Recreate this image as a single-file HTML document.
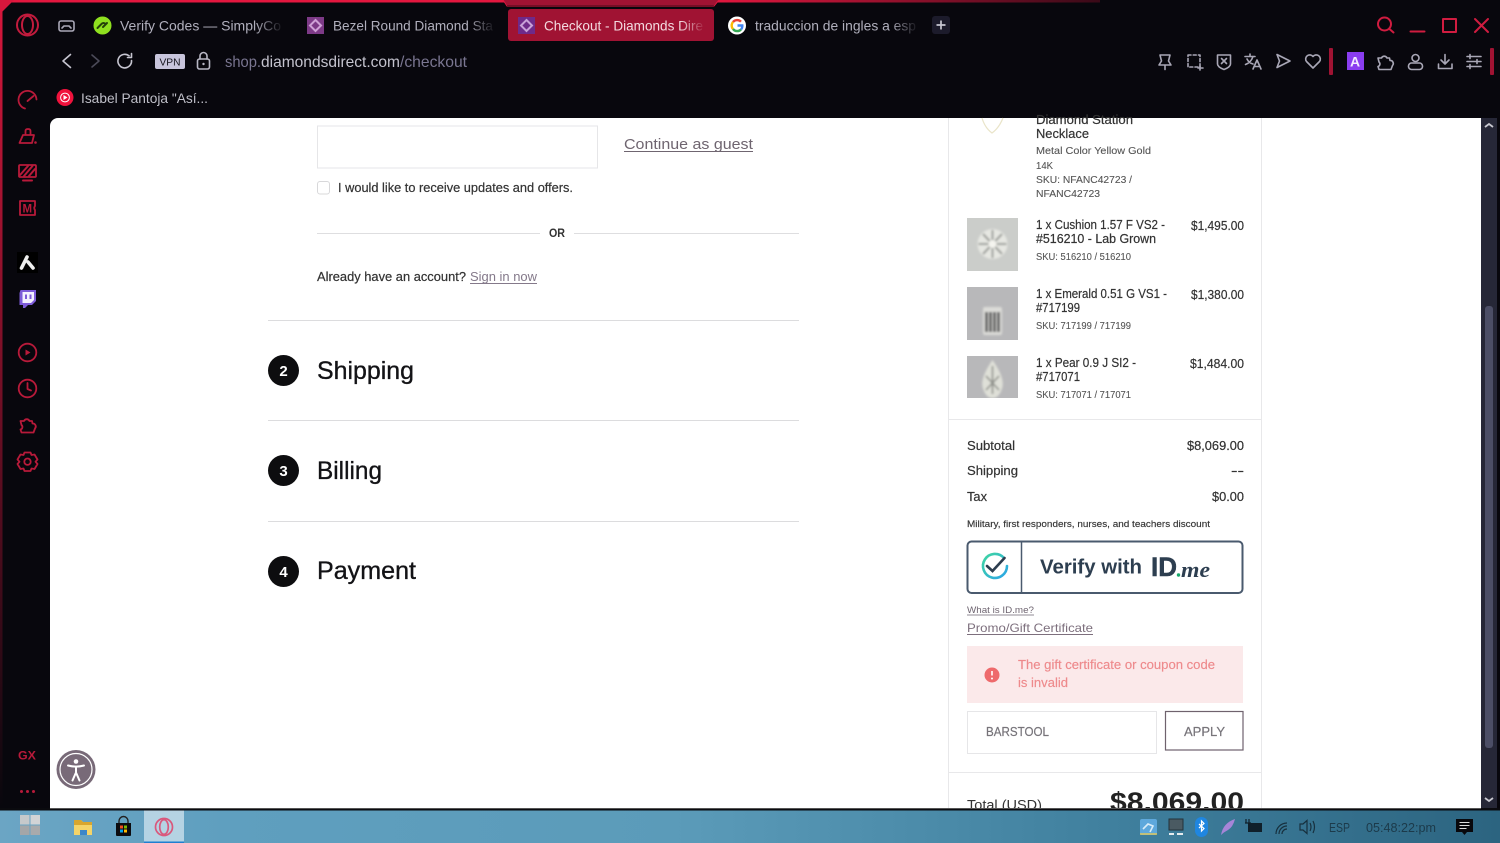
<!DOCTYPE html>
<html lang="en"><head><meta charset="utf-8"><title>Checkout - Diamonds Direct</title>
<style>
html,body{margin:0;padding:0;width:1500px;height:843px;overflow:hidden;background:#08070d}
svg{display:block;position:absolute;left:0;top:0;filter:blur(.35px)}
text{font-family:"Liberation Sans",sans-serif;white-space:pre}
.ic{fill:none;stroke:#a9a7b6;stroke-width:1.6;stroke-linecap:round;stroke-linejoin:round}
.rd{fill:none;stroke:#b81a3a;stroke-width:1.8;stroke-linecap:round;stroke-linejoin:round}
.wr{fill:none;stroke:#d01c40;stroke-width:2;stroke-linecap:round;stroke-linejoin:round}
.p{font-size:12.5px;fill:#333;stroke:#333;stroke-width:.2}
.d{font-size:10px;fill:#555;stroke:#555;stroke-width:.1}
.h{font-size:25px;fill:#131316;stroke:#131316;stroke-width:.35}
</style></head><body>
<svg width="1500" height="843" viewBox="0 0 1500 843" xmlns="http://www.w3.org/2000/svg">
<defs>
<linearGradient id="topL" x1="0" x2="1"><stop offset="0" stop-color="#e3173f"/><stop offset=".65" stop-color="#e3173f"/><stop offset="1" stop-color="#3a0a18"/></linearGradient>
<linearGradient id="leftL" x1="0" x2="0" y1="0" y2="1"><stop offset="0" stop-color="#d8173c"/><stop offset=".6" stop-color="#5a0d20"/><stop offset="1" stop-color="#08070d"/></linearGradient>
<linearGradient id="f1" gradientUnits="userSpaceOnUse" x1="255" x2="281"><stop offset="0" stop-color="#b0afbc"/><stop offset="1" stop-color="#b0afbc" stop-opacity=".1"/></linearGradient>
<linearGradient id="f2" gradientUnits="userSpaceOnUse" x1="467" x2="493"><stop offset="0" stop-color="#b0afbc"/><stop offset="1" stop-color="#b0afbc" stop-opacity=".1"/></linearGradient>
<linearGradient id="f3" gradientUnits="userSpaceOnUse" x1="680" x2="703"><stop offset="0" stop-color="#f3d9df"/><stop offset="1" stop-color="#f3d9df" stop-opacity=".1"/></linearGradient>
<linearGradient id="f4" gradientUnits="userSpaceOnUse" x1="890" x2="916"><stop offset="0" stop-color="#b0afbc"/><stop offset="1" stop-color="#b0afbc" stop-opacity=".1"/></linearGradient>
<linearGradient id="task" x1="0" x2="1"><stop offset="0" stop-color="#6ba5c4"/><stop offset=".15" stop-color="#5f9fbf"/><stop offset=".45" stop-color="#5b9bb9"/><stop offset=".75" stop-color="#3f7f9d"/><stop offset="1" stop-color="#2c6480"/></linearGradient>
<linearGradient id="chk" x1="0" x2="1" y1="0" y2="1"><stop offset="0" stop-color="#3fd6a0"/><stop offset="1" stop-color="#2aa5e8"/></linearGradient>
<filter id="soft"><feGaussianBlur stdDeviation="1.1"/></filter>
</defs>

<!-- chrome background -->
<rect width="1500" height="843" fill="#08070d"/>
<rect x="0" y="0" width="1100" height="2.5" fill="url(#topL)"/>
<rect x="0" y="0" width="2.5" height="808" fill="url(#leftL)"/>
<path d="M0 14 L14 0 H3 L0 3Z" fill="#d8173c"/>

<!-- active tab -->
<path d="M503 0 L507 5 H714 L719 0Z" fill="#a01333"/>
<path d="M503 0 L507 6 H714 L719 0" fill="none" stroke="#e3173f" stroke-width="1"/>
<rect x="508" y="9" width="206" height="32" rx="3" fill="#a01333"/>

<!-- logo -->
<g fill="none" stroke="#c21b3d" stroke-width="2"><circle cx="27.5" cy="25" r="10.5"/><ellipse cx="27.5" cy="25" rx="5.5" ry="9"/></g>
<g class="ic" stroke-width="1.4"><rect x="59" y="21" width="15" height="10" rx="2"/><path d="M62 28 l2-2h5l2 2"/></g>

<!-- tabs -->
<circle cx="102.5" cy="25.5" r="9" fill="#8fe01f"/>
<path d="M97.5 28 l4-4 a2.5 2.5 0 0 1 4 0 M103 27 l4-4" fill="none" stroke="#24410a" stroke-width="2" stroke-linecap="round"/>
<text x="120" y="30.5" font-size="14" fill="url(#f1)" textLength="161" lengthAdjust="spacingAndGlyphs">Verify Codes — SimplyCo</text>
<rect x="307" y="17" width="17" height="17" fill="#7d3a87"/>
<path d="M315.5 20 l5.5 5.5 -5.5 5.5 -5.5 -5.5Z" fill="none" stroke="#cfa0d6" stroke-width="2"/>
<text x="333" y="30.5" font-size="14" fill="url(#f2)" textLength="160" lengthAdjust="spacingAndGlyphs">Bezel Round Diamond Sta</text>
<rect x="518" y="17" width="17" height="17" fill="#6e2a8a"/>
<path d="M526.5 20 l5.5 5.5 -5.5 5.5 -5.5 -5.5Z" fill="none" stroke="#c9a0d8" stroke-width="2"/>
<text x="544" y="30.5" font-size="14" fill="url(#f3)" textLength="159" lengthAdjust="spacingAndGlyphs">Checkout - Diamonds Dire</text>
<circle cx="737" cy="25.5" r="9" fill="#fff"/>
<g fill="none" stroke-width="2.4"><path d="M741 21.7 A5.3 5.3 0 0 0 733 22" stroke="#ea4335"/><path d="M733 22 A5.3 5.3 0 0 0 733 29" stroke="#fbbc05"/><path d="M733 29 A5.3 5.3 0 0 0 741 29.5" stroke="#34a853"/><path d="M741 29.5 A5.3 5.3 0 0 0 742.3 25.5 H737.5" stroke="#4285f4"/></g>
<text x="755" y="30.5" font-size="14" fill="url(#f4)" textLength="161" lengthAdjust="spacingAndGlyphs">traduccion de ingles a esp</text>
<rect x="932" y="16" width="18" height="18" rx="3" fill="#1c1b2b"/>
<path d="M941 20.5 v9 M936.5 25 h9" stroke="#c8c7d2" stroke-width="1.7" fill="none"/>

<!-- window controls -->
<g class="wr"><circle cx="1384.5" cy="24" r="6.5"/><path d="M1389.5 29 l4 3.5"/><path d="M1410.5 31.5 h14"/><rect x="1443" y="19" width="13" height="13" stroke-linecap="butt"/><path d="M1475 19 l13 13 M1488 19 l-13 13"/></g>

<!-- nav row -->
<path class="ic" style="stroke:#c6c5d0" d="M70.5 54.5 l-7.5 6.5 7.5 6.5"/>
<path class="ic" style="stroke:#4b4a58" d="M92 55 l7 6 -7 6"/>
<path class="ic" style="stroke:#c6c5d0" d="M131.5 60.5 a6.8 6.8 0 1 1 -2.5 -4.7 M131.5 53.5 v4 h-4"/>
<rect x="155" y="54" width="30" height="15" rx="2" fill="#c8c5dc"/>
<text x="159.5" y="65.5" font-size="10.5" fill="#15141c" textLength="21" lengthAdjust="spacingAndGlyphs">VPN</text>
<g class="ic" style="stroke:#b8b7c4"><rect x="197.5" y="59" width="12" height="10" rx="2"/><path d="M200 59 v-3 a3.5 3.5 0 0 1 7 0 v3"/></g>
<circle cx="203.5" cy="64" r="1.2" fill="#b8b7c4"/>
<text x="225" y="67" font-size="16" fill="#7a7691" textLength="36" lengthAdjust="spacingAndGlyphs">shop.</text>
<text x="261" y="67" font-size="16" fill="#c4c3ce" textLength="139" lengthAdjust="spacingAndGlyphs">diamondsdirect.com</text>
<text x="400" y="67" font-size="16" fill="#7a7691" textLength="67" lengthAdjust="spacingAndGlyphs">/checkout</text>

<!-- toolbar icons -->
<g class="ic">
<path d="M1160 55 h10 l-1.5 6 2.5 4 h-12 l2.5 -4Z M1165 65 v4.5"/>
<rect x="1188" y="55" width="12" height="12" stroke-dasharray="3 2.2"/><path d="M1200 66 v4 M1198 68 h5"/>
<path d="M1217.5 55 h13 v9 q0 3 -6.5 5.5 q-6.5 -2.5 -6.5 -5.5Z M1221.5 58.5 l5 5 M1226.5 58.5 l-5 5"/>
<path d="M1245 56.5 h10 M1250 54 v2.5 M1253 56.5 q-2 6 -7.5 8 M1247 59 q2 4 6 5 M1253 69 l4 -9 4 9 M1254.5 66.5 h5"/>
<path d="M1277 54.5 l13 6.5 -13 6.5 2.5 -6.5Z"/>
<path d="M1313 68 l-6.5 -6.5 a4 4 0 0 1 6.5 -5 a4 4 0 0 1 6.5 5Z"/>
<path id="pz" d="M1378 58 h3.5 a3 3 0 0 1 5.5 0 h2.5 l.5 2.5 a3 3 0 0 1 2.5 5 l-1.5 4 h-12 l-1 -3 a2.6 2.6 0 0 0 1 -4.5Z"/>
<circle cx="1415.5" cy="58" r="3.5"/><rect x="1408.5" y="63" width="14" height="6.5" rx="3"/>
<path d="M1445 54.5 v9 M1441 60 l4 4 4 -4 M1438.5 64 v4.5 h13.5 v-4.5"/>
<path d="M1467 56.5 h14 M1467 61.5 h14 M1467 66.5 h14 M1470 54.5 v4 M1477 59.5 v4 M1470 64.5 v4"/>
</g>
<rect x="1329" y="48" width="4" height="27" rx="1" fill="#a01333"/>
<rect x="1490" y="48" width="4" height="27" rx="1" fill="#a01333"/>
<rect x="1347" y="52" width="17" height="18" fill="#8a3df0"/>
<text x="1350" y="66.5" font-size="14" font-weight="700" fill="#f2eaff">A</text>

<!-- bookmark row -->
<circle cx="65" cy="97.5" r="8.5" fill="#f0123c"/><circle cx="65" cy="97.5" r="4.4" fill="none" stroke="#fff" stroke-width="1"/><path d="M63.5 95 l4 2.5 -4 2.5Z" fill="#fff"/>
<text x="81" y="103" font-size="14" fill="#bfbfc8" textLength="127" lengthAdjust="spacingAndGlyphs">Isabel Pantoja "Así...</text>

<!-- sidebar -->
<g class="rd">
<path d="M25 108.5 A9 9 0 1 1 36.5 99.5 M27.5 101 l6 -5"/>
<path d="M23 135 h11 l-2 8 H19.5Z M25.5 135 v-4 q0 -2 2.5 -2 q2.5 0 2.5 2 v4"/>
<rect x="19" y="165" width="17" height="12" rx="1"/><path d="M20 175 l8 -9 M24 176 l8.500 -10 M29 176 l6 -7 M23 180.500 h9" stroke-width="2"/>
<path d="M20 201 h15 v5 q-1.500 2 0 4 v5 h-15Z"/>
<path d="M27.5 452.500 h0 M24.500 452.500 h6 l1 2.500 3 -.5 3 5 -2 2.200 2 2.300 -3 5 -3 -.5 -1 2.500 h-6 l-1 -2.500 -3 .5 -3 -5 2 -2.300 -2 -2.200 3 -5 3 .5Z"/>
<circle cx="27.500" cy="461.700" r="3.200"/>
<circle cx="27.500" cy="352.500" r="8.800"/>
<circle cx="27.500" cy="388.500" r="8.800"/><path d="M27.500 383 v6 l3.500 1.500"/>
<path d="M20.500 421 h3.500 a3 3 0 0 1 5.500 0 h2.500 l.5 2.500 a3 3 0 0 1 2.500 5 l-1.500 4 h-12 l-1 -3 a2.600 2.600 0 0 0 1 -4.500Z"/>
</g>
<circle cx="35.500" cy="142.500" r="1.300" fill="#b81a3a"/>
<text x="22.500" y="212.500" font-size="11.500" font-weight="700" fill="#b81a3a">M</text>
<rect x="17" y="252" width="21" height="21" fill="#000"/>
<path d="M21.500 268 L27 257 M28 262 L33 268" stroke="#eee" stroke-width="3.600" stroke-linecap="round" fill="none"/>
<path d="M20.500 290 h15.500 v11 l-4 4 h-4 l-3 3 h-2 v-3 h-3.500 v-12Z" fill="#7d5bd8"/>
<path d="M22.500 292 h11.500 v8 l-3 3 h-8.500Z" fill="#f4f0ff"/>
<path d="M26 294.500 v4.500 M30.500 294.500 v4.500" stroke="#7d5bd8" stroke-width="2"/>
<path d="M25.500 349.500 l5 3 -5 3Z" fill="#b81a3a"/>
<text x="18" y="759.500" font-size="11.500" font-weight="700" fill="#b81a3a" textLength="18" lengthAdjust="spacingAndGlyphs">GX</text>
<g fill="#b81a3a"><circle cx="21.500" cy="791.500" r="1.500"/><circle cx="27.500" cy="791.500" r="1.500"/><circle cx="33.500" cy="791.500" r="1.500"/></g>

<!-- page -->
<path d="M58 118 H1481 V808 H50 V126 a8 8 0 0 1 8 -8Z" fill="#fff"/>

<!-- left column -->
<rect x="317.500" y="126" width="280" height="42" fill="#fff" stroke="#e6e6e8"/>
<text x="624" y="149" font-size="15" fill="#6f6570" textLength="129" lengthAdjust="spacingAndGlyphs">Continue as guest</text>
<path d="M624 151.500 h129" stroke="#6f6570"/>
<rect x="317.500" y="181.500" width="12" height="12.500" rx="2.500" fill="#fff" stroke="#d8d8da"/>
<text x="338" y="192" class="p" textLength="235" lengthAdjust="spacingAndGlyphs">I would like to receive updates and offers.</text>
<path d="M317 233.500 H540 M574 233.500 H799" stroke="#dedee0"/>
<text x="549" y="237" font-size="11.500" font-weight="700" fill="#333" textLength="16" lengthAdjust="spacingAndGlyphs">OR</text>
<text x="317" y="281" class="p" textLength="149" lengthAdjust="spacingAndGlyphs">Already have an account?</text>
<text x="470" y="281" font-size="12.500" fill="#84798a" textLength="67" lengthAdjust="spacingAndGlyphs">Sign in now</text>
<path d="M470 283.500 h67" stroke="#84798a"/>
<path d="M268 320.500 H799 M268 420.500 H799 M268 521.500 H799" stroke="#dcdcde"/>
<g fill="#0d0d0f"><circle cx="283.500" cy="370.500" r="15.500"/><circle cx="283.500" cy="470.500" r="15.500"/><circle cx="283.500" cy="571.500" r="15.500"/></g>
<g font-size="15" font-weight="700" fill="#fff" text-anchor="middle"><text x="283.500" y="376">2</text><text x="283.500" y="476">3</text><text x="283.500" y="577">4</text></g>
<text x="317" y="379" class="h" textLength="97" lengthAdjust="spacingAndGlyphs">Shipping</text>
<text x="317" y="479" class="h" textLength="65" lengthAdjust="spacingAndGlyphs">Billing</text>
<text x="317" y="579" class="h" textLength="99" lengthAdjust="spacingAndGlyphs">Payment</text>

<!-- right column -->
<path d="M948.500 118 V808 M1261.500 118 V808" stroke="#e8e8ea"/>
<path d="M949 419.500 H1261 M949 772.500 H1261" stroke="#e8e8ea"/>
<path d="M982 118 q3 10 10 15 q7 -5 11 -15" fill="none" stroke="#e9e4c8" stroke-width="1.200"/>
<text x="1036" y="124" class="p" textLength="97" lengthAdjust="spacingAndGlyphs">Diamond Station</text>
<text x="1036" y="138" class="p" textLength="53" lengthAdjust="spacingAndGlyphs">Necklace</text>
<text x="1036" y="154" class="d" textLength="115" lengthAdjust="spacingAndGlyphs">Metal Color Yellow Gold</text>
<text x="1036" y="169" class="d" textLength="17" lengthAdjust="spacingAndGlyphs">14K</text>
<text x="1036" y="183" class="d" textLength="96" lengthAdjust="spacingAndGlyphs">SKU: NFANC42723 /</text>
<text x="1036" y="197" class="d" textLength="64" lengthAdjust="spacingAndGlyphs">NFANC42723</text>

<rect x="967" y="218" width="51" height="53" fill="#cbcdca"/>
<g filter="url(#soft)"><circle cx="992.500" cy="244" r="15" fill="#e6e7e2"/><path d="M992.500 230 v28 M978.500 244 h28 M983 234 l19 20 M1002 234 l-19 20" stroke="#9a9c98" stroke-width="2"/><circle cx="992.500" cy="244" r="4" fill="#f4f4ef"/></g>
<text x="1036" y="229" class="p" textLength="129" lengthAdjust="spacingAndGlyphs">1 x Cushion 1.57 F VS2 -</text>
<text x="1036" y="243" class="p" textLength="120" lengthAdjust="spacingAndGlyphs">#516210 - Lab Grown</text>
<text x="1036" y="260" class="d" textLength="95" lengthAdjust="spacingAndGlyphs">SKU: 516210 / 516210</text>
<text x="1191" y="230" class="p" textLength="53" lengthAdjust="spacingAndGlyphs">$1,495.00</text>

<rect x="967" y="287" width="51" height="53" fill="#b8b8ba"/>
<g filter="url(#soft)"><rect x="983" y="307" width="19" height="28" rx="2" fill="#dcdcd8"/><path d="M986.500 312 v20 M990.500 312 v20 M994.500 312 v20 M998.500 312 v20" stroke="#4a4a4c" stroke-width="2.600"/></g>
<text x="1036" y="298" class="p" textLength="131" lengthAdjust="spacingAndGlyphs">1 x Emerald 0.51 G VS1 -</text>
<text x="1036" y="312" class="p" textLength="44" lengthAdjust="spacingAndGlyphs">#717199</text>
<text x="1036" y="329" class="d" textLength="95" lengthAdjust="spacingAndGlyphs">SKU: 717199 / 717199</text>
<text x="1191" y="299" class="p" textLength="53" lengthAdjust="spacingAndGlyphs">$1,380.00</text>

<rect x="967" y="356" width="51" height="42" fill="#b8b8ba"/>
<g filter="url(#soft)"><path d="M992.500 360 q-14 20 -9 30 q3 8 9 8 q6 0 9 -8 q5 -10 -9 -30Z" fill="#dfe0d8"/><path d="M992.500 366 v28 M986 376 l13 14 M999 376 l-13 14" stroke="#8c8e88" stroke-width="1.600"/></g>
<rect x="960" y="398" width="70" height="6" fill="#fff"/>
<text x="1036" y="367" class="p" textLength="100" lengthAdjust="spacingAndGlyphs">1 x Pear 0.9 J SI2 -</text>
<text x="1036" y="381" class="p" textLength="44" lengthAdjust="spacingAndGlyphs">#717071</text>
<text x="1036" y="398" class="d" textLength="95" lengthAdjust="spacingAndGlyphs">SKU: 717071 / 717071</text>
<text x="1190" y="368" class="p" textLength="54" lengthAdjust="spacingAndGlyphs">$1,484.00</text>

<text x="967" y="450" class="p" textLength="48" lengthAdjust="spacingAndGlyphs">Subtotal</text>
<text x="1187" y="450" class="p" textLength="57" lengthAdjust="spacingAndGlyphs">$8,069.00</text>
<text x="967" y="475" class="p" textLength="51" lengthAdjust="spacingAndGlyphs">Shipping</text>
<text x="1231" y="475" class="p" textLength="13" lengthAdjust="spacingAndGlyphs">--</text>
<text x="967" y="501" class="p" textLength="20" lengthAdjust="spacingAndGlyphs">Tax</text>
<text x="1212" y="501" class="p" textLength="32" lengthAdjust="spacingAndGlyphs">$0.00</text>
<text x="967" y="527" font-size="9.500" fill="#333" stroke="#333" stroke-width=".15" textLength="243" lengthAdjust="spacingAndGlyphs">Military, first responders, nurses, and teachers discount</text>

<rect x="967.500" y="541.500" width="275" height="51.500" rx="4" fill="#fff" stroke="#4a5a6e" stroke-width="2"/>
<path d="M1021.500 542 V593" stroke="#4a5a6e" stroke-width="1.500"/>
<path d="M1005 558 A12 12 0 1 0 1008 566" fill="none" stroke="url(#chk)" stroke-width="2.600" stroke-linecap="round" transform="translate(-1,0)"/>
<path d="M987 566 l5.500 5 12 -13" fill="none" stroke="#2d3e50" stroke-width="2.600" stroke-linecap="round"/>
<text x="1040" y="573.500" font-size="20" font-weight="700" fill="#2d3e50" textLength="102" lengthAdjust="spacingAndGlyphs">Verify with</text>
<text x="1151" y="576" font-size="27" font-weight="700" fill="#2d3e50" stroke="#2d3e50" stroke-width=".5" textLength="26" lengthAdjust="spacingAndGlyphs">ID</text>
<circle cx="1178.500" cy="575" r="1.700" fill="#18a86b"/>
<text x="1181" y="577" font-size="22" font-style="italic" font-weight="700" style="font-family:'Liberation Serif',serif" fill="#2d3e50" textLength="29" lengthAdjust="spacingAndGlyphs">me</text>

<text x="967" y="613" font-size="9.500" fill="#6e6470" textLength="67" lengthAdjust="spacingAndGlyphs">What is ID.me?</text>
<path d="M967 615 h67" stroke="#6e6470" stroke-width=".8"/>
<text x="967" y="632" font-size="12" fill="#7d6f7d" textLength="126" lengthAdjust="spacingAndGlyphs">Promo/Gift Certificate</text>
<path d="M967 634.500 h126" stroke="#7d6f7d"/>

<rect x="967" y="646" width="276" height="57" fill="#fbe9ea"/>
<circle cx="992" cy="675" r="7.500" fill="#ee6a6c"/><path d="M992 671 v4.500" stroke="#fff" stroke-width="1.600"/><circle cx="992" cy="678.500" r="1" fill="#fff"/>
<text x="1018" y="669" font-size="12.500" fill="#ee8a8c" stroke="#ee8a8c" stroke-width=".15" textLength="197" lengthAdjust="spacingAndGlyphs">The gift certificate or coupon code</text>
<text x="1018" y="687" font-size="12.500" fill="#ee8a8c" stroke="#ee8a8c" stroke-width=".15" textLength="50" lengthAdjust="spacingAndGlyphs">is invalid</text>

<rect x="967.500" y="711.500" width="189" height="42" fill="#fff" stroke="#e6e6e8"/>
<text x="986" y="736" font-size="12.500" fill="#77747a" stroke="#77747a" stroke-width=".2" textLength="63" lengthAdjust="spacingAndGlyphs">BARSTOOL</text>
<rect x="1165.500" y="711.500" width="77.500" height="38.500" fill="#fff" stroke="#6f626d" stroke-width="1.200"/>
<text x="1184" y="736" font-size="12.500" fill="#77747a" stroke="#77747a" stroke-width=".2" textLength="41" lengthAdjust="spacingAndGlyphs">APPLY</text>

<text x="967" y="809.500" font-size="13.500" fill="#333" textLength="75" lengthAdjust="spacingAndGlyphs">Total (USD)</text>
<text x="1110" y="811" font-size="27" font-weight="700" fill="#222" textLength="134" lengthAdjust="spacingAndGlyphs">$8,069.00</text>

<!-- accessibility button -->
<circle cx="76" cy="769.500" r="19.500" fill="#786a78"/><circle cx="76" cy="769.500" r="16" fill="none" stroke="#fff" stroke-width="1.200"/>
<circle cx="76" cy="761.500" r="2.300" fill="#fff"/>
<path d="M68 765.500 q8 2.200 16 0 M76 766.500 v6.500 M76 772.500 l-3.500 8 M76 772.500 l3.500 8" fill="none" stroke="#fff" stroke-width="2" stroke-linecap="round" stroke-linejoin="round"/>

<!-- scrollbar -->
<rect x="1481" y="118" width="16" height="690" fill="#262737"/>
<rect x="1485" y="306" width="8" height="442" rx="3" fill="#4c4e66"/>
<path d="M1485 127 l4 -3 4 3 M1485 798 l4 3 4 -3" fill="none" stroke="#c8c8d0" stroke-width="1.800"/>

<!-- bottom cover + taskbar -->
<rect x="0" y="808" width="1500" height="2.500" fill="#0a0a0e"/>
<rect x="50" y="808" width="1431" height="1" fill="#555"/>
<rect x="0" y="810.500" width="1500" height="32.500" fill="url(#task)"/>
<g><rect x="20" y="815" width="9.500" height="9.500" fill="#c6c9cb"/><rect x="30.500" y="815" width="9.500" height="9.500" fill="#d2d4d6"/><rect x="20" y="825.500" width="9.500" height="9.500" fill="#a4a6a8"/><rect x="30.500" y="825.500" width="9.500" height="9.500" fill="#a8aaac"/></g>
<path d="M74 820 h7 l2 2 h9 v13 h-18Z" fill="#f5d468"/><path d="M74 820 h7 l2 2 h9 v3 h-18Z" fill="#d9a62e"/><path d="M80 835 v-5 h7 v5" fill="#3b87c9"/>
<path d="M116 823 h15 v12 a1 1 0 0 1 -1 1 h-13 a1 1 0 0 1 -1 -1Z" fill="#0c0c0f"/><path d="M119 823 v-2 a4 4 0 0 1 9 0 v2" fill="none" stroke="#222" stroke-width="1.400"/>
<rect x="120" y="825.500" width="3" height="3" fill="#f25022"/><rect x="124" y="825.500" width="3" height="3" fill="#7fba00"/><rect x="120" y="829.500" width="3" height="3" fill="#00a4ef"/><rect x="124" y="829.500" width="3" height="3" fill="#ffb900"/>
<rect x="144" y="810.500" width="40" height="32.500" fill="#b5d3e3"/><rect x="144" y="841.500" width="40" height="1.500" fill="#1f7fd0"/>
<g fill="none" stroke="#d9587c" stroke-width="1.700"><circle cx="164" cy="827" r="8.500"/><ellipse cx="164" cy="827" rx="4.300" ry="7.300"/></g>

<!-- tray -->
<rect x="1140" y="819" width="17" height="16" rx="2" fill="#5ea8dc"/><path d="M1143 829 l5 -5 5 2 -3 6" fill="none" stroke="#d8ecf8" stroke-width="1.600"/><path d="M1140 834 h17" stroke="#e2c85a" stroke-width="1.500"/>
<rect x="1169" y="819" width="14" height="11" fill="#4a5a62" stroke="#23323a"/><path d="M1169 834 h5 M1177 834 h6" stroke="#e6ecef" stroke-width="2"/>
<rect x="1195" y="817" width="13" height="20" rx="6.500" fill="#1f86e0"/><path d="M1199 823 l5 4.500 -2.500 2.500 v-10 l2.500 2.500 -5 4.500" transform="translate(0,1)" fill="none" stroke="#fff" stroke-width="1.200"/>
<path d="M1221 835 q2 -12 14 -16 q-2 8 -7 11 q-4 2 -7 5Z" fill="#a685d8"/>
<rect x="1248" y="823" width="14" height="9" fill="#10202a"/><path d="M1246 819 v4 M1249 819 v4 M1245 823 h6" stroke="#10202a" stroke-width="1.200" fill="none"/>
<g fill="none" stroke="#17303e" stroke-width="1.200"><path d="M1276 834 a11 11 0 0 1 11 -11 M1279 834 a8 8 0 0 1 8 -8 M1282 834 a5 5 0 0 1 5 -5"/><path d="M1300 824 h3 l4 -3.500 v13 l-4 -3.500 h-3Z M1310 823 q2 4 0 8 M1313 821 q3 6 0 12"/></g>
<text x="1329" y="832" font-size="13" fill="#1c3a4a" textLength="21" lengthAdjust="spacingAndGlyphs">ESP</text>
<text x="1366" y="832" font-size="13" fill="#1c3a4a" textLength="70" lengthAdjust="spacingAndGlyphs">05:48:22:pm</text>
<path d="M1456 819 h17 v13 h-6 l-2.500 3 -2.500 -3 h-6Z" fill="#08080c"/><path d="M1459.500 822.500 h10 M1459.500 825.500 h10 M1459.500 828.500 h7" stroke="#ddd" stroke-width="1"/>
</svg>
</body></html>
